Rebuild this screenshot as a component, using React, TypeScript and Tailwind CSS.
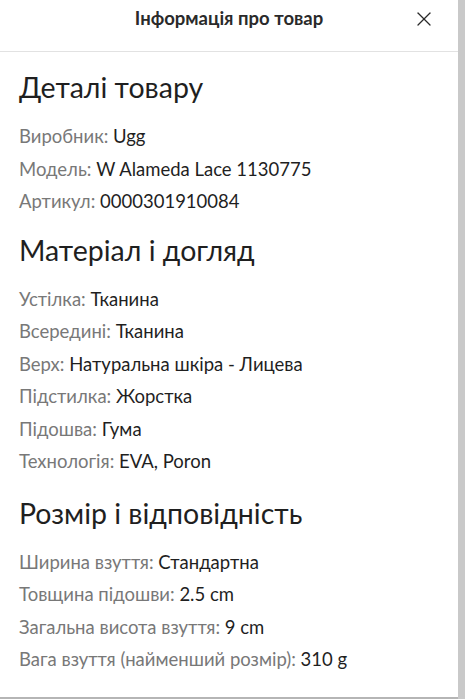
import { X } from "lucide-react";

interface Row {
  label: string;
  value: string;
}

interface Section {
  title: string;
  gap: string;
  rows: Row[];
}

const sections: Section[] = [
  {
    title: "Деталі товару",
    gap: "",
    rows: [
      { label: "Виробник:", value: "Ugg" },
      { label: "Модель:", value: "W Alameda Lace 1130775" },
      { label: "Артикул:", value: "0000301910084" },
    ],
  },
  {
    title: "Матеріал і догляд",
    gap: "mt-[14px]",
    rows: [
      { label: "Устілка:", value: "Тканина" },
      { label: "Всередині:", value: "Тканина" },
      { label: "Верх:", value: "Натуральна шкіра - Лицева" },
      { label: "Підстилка:", value: "Жорстка" },
      { label: "Підошва:", value: "Гума" },
      { label: "Технологія:", value: "EVA, Poron" },
    ],
  },
  {
    title: "Розмір і відповідність",
    gap: "mt-[17px]",
    rows: [
      { label: "Ширина взуття:", value: "Стандартна" },
      { label: "Товщина підошви:", value: "2.5 cm" },
      { label: "Загальна висота взуття:", value: "9 cm" },
      { label: "Вага взуття (найменший розмір):", value: "310 g" },
    ],
  },
];

export default function App() {
  return (
    <div
      className="flex h-[699px] w-[465px] overflow-hidden bg-white text-[#1f1f1f]"
      style={{ fontFamily: "Lato, 'Noto Sans', sans-serif" }}
    >
      <div className="flex min-w-0 flex-1 flex-col border-b-2 border-[#b5b5b5]">
        {/* Header */}
        <div className="relative flex h-[52px] shrink-0 items-start justify-center border-b border-[#e2e2e2] pt-[6px]">
          <span className="text-[18.5px] font-bold leading-[24px] text-[#2a2a2a]">
            Інформація про товар
          </span>
          <button className="absolute right-[22px] top-[7px] text-[#2a2a2a]">
            <X size={24} strokeWidth={1.3} />
          </button>
        </div>

        {/* Sections */}
        <div className="flex flex-col px-[19px] pt-[17px]">
          {sections.map((section) => (
            <div key={section.title} className={section.gap}>
              <h2 className="mb-[15px] text-[28.5px] font-normal leading-[36px] text-[#1f1f1f]">
                {section.title}
              </h2>
              {section.rows.map((row) => (
                <div key={row.label} className="text-[18.5px] leading-[32.5px]">
                  <span className="text-[#787878]">{row.label}</span>{" "}
                  <span className="text-[#1f1f1f]">{row.value}</span>
                </div>
              ))}
            </div>
          ))}
        </div>
      </div>

      {/* Scrollbar strip */}
      <div className="w-[7px] shrink-0 bg-[#c9c9c9]" />
    </div>
  );
}
